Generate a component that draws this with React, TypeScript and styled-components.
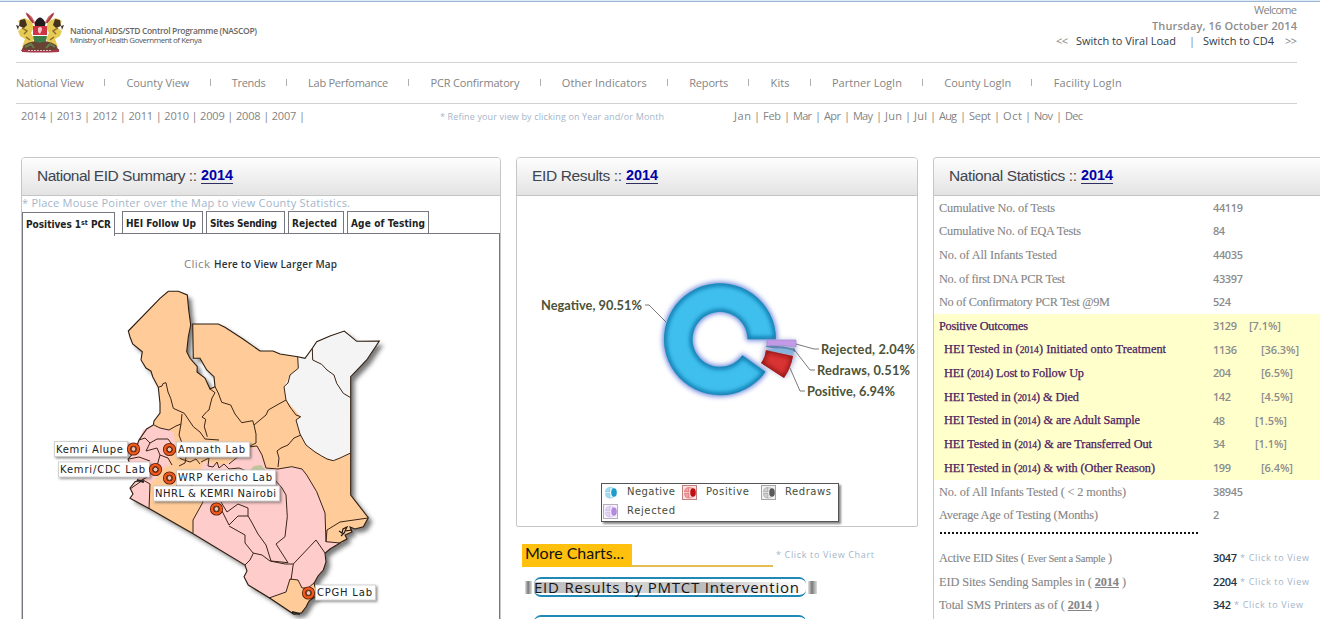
import React, { useLayoutEffect, useRef, useState } from 'react';
import styled, { createGlobalStyle, css } from 'styled-components';

const GlobalStyle = createGlobalStyle`
  * { box-sizing: border-box; }
  body { margin: 0; background: #fff; overflow: hidden; }
`;

const humanist = "'Open Sans', 'Noto Sans', sans-serif";
const verdana = "'DejaVu Sans', sans-serif";
const georgia = "'Liberation Serif', serif";
const arial = "'Liberation Sans', sans-serif";
const calibri = "Lato, sans-serif";

const FitSpan = styled.span`
  display: inline-block;
  white-space: nowrap;
`;

/* Tracks a label so that it fills the given width. */
function Fit({ w, children }: { w: number; children: React.ReactNode }) {
  const ref = useRef<HTMLSpanElement>(null);
  const [spacing, setSpacing] = useState(0);
  useLayoutEffect(() => {
    const el = ref.current;
    if (!el) return;
    const n = (el.textContent || '').length;
    const natural = el.getBoundingClientRect().width;
    if (n > 1) setSpacing((w - natural) / (n - 1));
  }, [w]);
  return (
    <FitSpan ref={ref} style={{ letterSpacing: spacing, marginRight: -spacing }}>
      {children}
    </FitSpan>
  );
}

const Page = styled.div`
  width: 1320px;
  height: 619px;
  overflow: hidden;
  background: #fff;
  color: #848484;
  font: 11px/14px ${humanist};
`;
const TopStrip = styled.div`
  height: 2px;
  background: #dfeaf7;
  border-bottom: 1px solid #9db7d6;
`;
const Header = styled.header`
  height: 61px;
  margin: 0 23px 0 16px;
  border-bottom: 1px solid #d2d2d2;
  display: flex;
  justify-content: space-between;
`;
const Brand = styled.div`
  display: flex;
  padding-top: 10px;
`;
const BrandText = styled.div`
  padding: 14px 0 0 6px;
  font: 8px/9px ${humanist};
  color: #555;
  b { display: block; font-size: 8.5px; font-weight: 600; color: #666; }
`;
const Account = styled.div`
  display: flex;
  flex-direction: column;
  align-items: flex-end;
  line-height: 15.5px;
`;
const DateText = styled.div`
  font-weight: 600;
  color: #8d8d8d;
`;
const Switches = styled.div`
  display: flex;
  a { color: #2f3b48; }
  i { font-style: normal; margin: 0 8px 0 13px; }
`;
const Lt = styled.span`
  margin: 0 8px;
  &:first-child { margin-left: 0; }
  &:last-child { margin: 0 0 0 11px; }
`;
const Nav = styled.nav`
  height: 41px;
  margin: 0 23px 0 16px;
  border-bottom: 1px solid #d2d2d2;
  display: flex;
  align-items: center;
`;
const NavSep = styled.span`
  width: 1px;
  height: 7px;
  background: #b0b0b0;
  margin: 0 21.2px 2px 20.2px;
`;
const Filters = styled.div`
  height: 53px;
  padding: 5px 0 0 21px;
  display: flex;
`;
const Hint = styled.div<{ $size?: number }>`
  font-size: ${(p) => p.$size || 9}px;
  color: #a3b6ca;
`;
const YearList = styled.div`width: 419px;`;
const FilterHint = styled(Hint)`width: 294px; padding-top: 1px;`;
const Months = styled.div`display: flex;`;
const Bar = styled.span`
  width: 12px;
  text-align: center;
`;
const Columns = styled.main`
  display: flex;
  align-items: flex-start;
  padding-left: 21px;
`;
const Column = styled.section<{ $w: number; $gap?: number }>`
  flex: none;
  width: ${(p) => p.$w}px;
  margin-right: ${(p) => p.$gap || 0}px;
`;
const Panel = styled.div<{ $h: number }>`
  height: ${(p) => p.$h}px;
  border: 1px solid #c6c6c6;
  border-radius: 4px 4px 2px 2px;
  overflow: hidden;
`;
const PanelTitle = styled.h2`
  margin: 0;
  height: 38px;
  padding: 0 15px 2px;
  display: flex;
  align-items: center;
  gap: 4px;
  background: linear-gradient(#fefefe, #e3e3e3);
  border-bottom: 1px solid #c4c4c4;
  font: 15.5px/18px ${arial};
  color: #3d4550;
  b { color: #0000a8; border-bottom: 1px solid #303060; font-size: 14.4px; line-height: 15px; margin-top: 1px; }
`;
const MapHint = styled(Hint)`
  height: 15px;
  line-height: 14px;
`;
const Tabs = styled.div`
  display: flex;
  height: 22px;
  gap: 3px;
  position: relative;
`;
const Tab = styled.div<{ $w: number; $active?: boolean }>`
  width: ${(p) => p.$w}px;
  height: 22px;
  border: 1px solid #77777f;
  border-bottom: 0;
  padding: 0 0 0 3px;
  background: #fff;
  color: #222;
  font: bold 10px/23px ${verdana};
  font-stretch: condensed;
  ${(p) => p.$active && css`
    height: 24px;
    margin: 1px 4px -2px 0;
    z-index: 1;
  `}
  sup { font-size: 7px; line-height: 0; vertical-align: 3px; }
`;
const TabBody = styled.div`
  height: 386px;
  border: 1px solid #77777f;
  border-bottom: 0;
`;
const MapLink = styled.div`
  display: flex;
  gap: 4px;
  padding: 23px 0 0 161px;
  height: 46px;
  font-size: 11.5px;
  a { font-size: 10px; font-weight: 600; color: #2a333d; }
`;
const Drawing = styled.svg`display: block; flex: none;`;
const ChartArea = styled.div`
  height: 287px;
`;
const Legend = styled.div`
  width: 238px;
  height: 39px;
  margin-left: 84px;
  padding: 0 1px;
  border: 1px solid #555;
  box-shadow: 2px 2px 2px #888;
  display: grid;
  grid-template-columns: 79px 79px 78px;
  grid-auto-rows: 19px;
`;
const LegendItem = styled.div`
  display: flex;
  align-items: center;
  gap: 9px;
  font: 10px/16px ${verdana};
  color: #444d3a;
  span { padding-bottom: 3px; }
  svg { margin-top: -2px; }
`;
const MoreCharts = styled.div`
  display: flex;
  align-items: flex-start;
  margin: 17px 0 0 6px;
`;
const MoreLabel = styled.div`
  width: 110px;
  height: 23px;
  padding-left: 3px;
  background: #ffc00e;
  color: #111;
  font: 16px/17px ${calibri};
`;
const MoreLine = styled.div`
  width: 141px;
  height: 2px;
  margin: 21px 3px 0 0;
  background: #e2bf50;
`;
const MoreHint = styled(Hint)`padding-top: 4px;`;
const Ribbon = styled.div`
  width: 292px;
  height: 20px;
  margin: 10px 0 18px 9px;
  display: grid;
  grid-template-columns: 7px 1fr 9px;
  align-items: center;
  gap: 2px;
`;
const RibbonEnd = styled.span`
  height: 13px;
  background: linear-gradient(90deg, #e4e4e4, #777 45%, #999 60%, #ddd);
`;
const RibbonFace = styled.div`
  height: 20px;
  border-top: 2px solid #2089b8;
  border-bottom: 2px solid #2089b8;
  border-radius: 7px;
  display: flex;
  align-items: center;
  background: linear-gradient(90deg, #bcbcbc, #d4d4d4 40%, #b9b9b9 60%, #eee 88%, #fff) center / 100% 11px no-repeat;
  color: #151515;
  font: 15px/14px ${humanist};
`;
const StatsPanel = styled(Panel)`border-bottom: 0; border-right: 0; border-radius: 4px 0 0 0;`;
const Stat = styled.div<{ $hot?: boolean }>`
  height: 23.66px;
  display: grid;
  grid-template-columns: 274px 1fr;
  align-items: center;
  padding-left: 5px;
  background: ${(p) => (p.$hot ? '#ffffcc' : 'transparent')};
`;
const StatLabel = styled.div<{ $indent?: boolean; $hot?: boolean }>`
  font: 12.3px/16px ${georgia};
  color: ${(p) => (p.$hot ? '#4a1a60' : '#858585')};
  padding-left: ${(p) => (p.$indent ? 5 : 0)}px;
  -webkit-text-stroke: ${(p) => (p.$hot ? 0.25 : 0.1)}px;
  small { font-size: 10.5px; }
`;
const OldStyle = styled.span`
  font-size: 9.5px;
`;
const StatValue = styled.div<{ $dark?: boolean }>`
  display: flex;
  align-items: center;
  font-weight: 600;
  font-size: 11px;
  color: ${(p) => (p.$dark ? '#26323f' : '#8c8c8c')};
`;
const Percent = styled.span<{ $gap: number }>`
  margin-left: ${(p) => p.$gap}px;
`;
const ViewHint = styled(Hint)`
  margin-left: 3px;
  font-weight: 500;
`;
const Dots = styled.div`
  width: 259px;
  height: 2px;
  margin: 5px 0 12px 6px;
  background: repeating-linear-gradient(90deg, #111 0 2px, transparent 2px 4px);
`;

const navItems: [string, number][] = [
  ['National View', 68], ['County View', 63], ['Trends', 34], ['Lab Perfomance', 80],
  ['PCR Confirmatory', 89], ['Other Indicators', 85], ['Reports', 39], ['Kits', 19],
  ['Partner LogIn', 70], ['County LogIn', 67], ['Facility LogIn', 68],
];
const months: [string, number][] = [
  ['Jan', 17], ['Feb', 18], ['Mar', 19], ['Apr', 17], ['May', 20], ['Jun', 17],
  ['Jul', 13], ['Aug', 18], ['Sept', 22], ['Oct', 19], ['Nov', 19], ['Dec', 18],
];
type Row = { t: string; w: number; v: string; vw: number; p?: string; pw?: number; gap?: number; hot?: boolean; indent?: boolean };
const rows: Row[] = [
  { t: 'Cumulative No. of Tests', w: 116, v: '44119', vw: 30 },
  { t: 'Cumulative No. of EQA Tests', w: 142, v: '84', vw: 12 },
  { t: 'No. of All Infants Tested', w: 118, v: '44035', vw: 30 },
  { t: 'No. of first DNA PCR Test', w: 126, v: '43397', vw: 30 },
  { t: 'No of Confirmatory PCR Test @9M', w: 171, v: '524', vw: 18 },
  { t: 'Positive Outcomes', w: 89, v: '3129', vw: 24, p: '[7.1%]', pw: 32, gap: 12, hot: true },
  { t: 'HEI Tested in (2014) Initiated onto Treatment', w: 222, v: '1136', vw: 24, p: '[36.3%]', pw: 38, gap: 24, hot: true, indent: true },
  { t: 'HEI (2014) Lost to Follow Up', w: 140, v: '204', vw: 18, p: '[6.5%]', pw: 32, gap: 30, hot: true, indent: true },
  { t: 'HEI Tested in (2014) & Died', w: 135, v: '142', vw: 18, p: '[4.5%]', pw: 32, gap: 30, hot: true, indent: true },
  { t: 'HEI Tested in (2014) & are Adult Sample', w: 196, v: '48', vw: 12, p: '[1.5%]', pw: 32, gap: 30, hot: true, indent: true },
  { t: 'HEI Tested in (2014) & are Transferred Out', w: 208, v: '34', vw: 12, p: '[1.1%]', pw: 32, gap: 30, hot: true, indent: true },
  { t: 'HEI Tested in (2014) & with (Other Reason)', w: 211, v: '199', vw: 18, p: '[6.4%]', pw: 32, gap: 30, hot: true, indent: true },
  { t: 'No. of All Infants Tested ( < 2 months)', w: 187, v: '38945', vw: 30 },
  { t: 'Average Age of Testing (Months)', w: 159, v: '2', vw: 6 },
];

/* Sets the year inside a label in small figures. */
function withYear(text: string) {
  const [before, after] = text.split('2014');
  return after === undefined ? text : <>{before}<OldStyle>2014</OldStyle>{after}</>;
}

function Crest() {
  return (
    <Drawing width="48" height="42" viewBox="0 0 48 42">
      <path d="M10 1l5 4 16 27M38 1l-5 4-16 27" stroke="#c4686a" strokeWidth="1.6" fill="none" />
      <path d="M11 2l6 9M37 2l-6 9" stroke="#a83a40" strokeWidth="2.2" />
      <path d="M2 9l6-3 7 3 3 6-3 6 3 5-3 9H6l3-8-5-3-2-5 4-3z" fill="#e5cb55" />
      <path d="M46 9l-6-3-7 3-3 6 3 6-3 5 3 9h9l-3-8 5-3 2-5-4-3z" fill="#e5cb55" />
      <path d="M4 8l5-1 2 6-3 3-5-2zM44 8l-5-1-2 6 3 3 5-2zM0 13l3 1-1 4zM48 13l-3 1 1 4z" fill="#45331c" />
      <path d="M6 16l5 3-3 3M42 16l-5 3 3 3M10 25l4 3M38 25l-4 3" stroke="#8b6a24" strokeWidth="1.4" fill="none" />
      <path d="M19 10q5-9 10 0v5H19z" fill="#211d1d" />
      <path d="M17 14h14v10H17z" fill="#cf3444" />
      <path d="M17 24h14q-1 8-7 11-6-3-7-11z" fill="#3c7d48" />
      <path d="M16 23.500h16" stroke="#fff" strokeWidth="1" />
      <path d="M22 16q4-3 4 2l-2 4-2-2z" fill="#f5c5c9" />
      <path d="M8 33q8-6 16-2 8-4 16 2l3 6H5z" fill="#684334" />
      <path d="M9 35l6-3 3 4M30 36l4-4 5 3" stroke="#63804b" strokeWidth="2" fill="none" />
      <path d="M6 37q18 4 37 0v3q-18 1-37 0z" fill="#a2394b" />
      <path d="M12 38.500h24" stroke="#e3bcc0" strokeWidth="1" strokeDasharray="2 1" />
    </Drawing>
  );
}

const outline = 'M128.300 331L160 298.300 168.300 291.300 178.300 291.300 187.300 295 188.700 310 190.700 325 188.300 337 186.700 351.700 190 358.300 197.300 366.700 197 372 205 378 210 389 215 386.700 214 376.700 206.700 370 200 358.300 193.300 358.300 192.700 324 218.300 324 225 327.300 243 339 260 351 273 351 280 354 297.700 356.700 305 358.300 312.300 348.300 316.700 341.700 330 336 344.300 331 356.700 341.300 379.300 341 366.700 360 350.700 376.700 350.700 495 368.300 517.700 363.300 526.700 355 529 350 527 352 532 345 535 347 539 341.700 541.700 336.700 545 330 549 325 553.300 326 562 323.300 570 318 576 314 583.300 316 590 315 596.700 309 601 306 607 301.700 612.700 294 614.300 270 598.300 248.300 585 244 576.700 247 571 245 565 192.300 533.300 150 509 130 498.300 133 494 130 488 135 481.700 142 480 147 477 143 470 137 466 130 464 128 459 135 451 139 440 146.700 429 153.300 425 154 421 160 413 160 403.300 158.300 387.300 152.700 376.700 151 371 146 368 141 360 142.300 351.700 132.700 344 130 337Z';
const pinks = [
  'M139 440L143 430 153 426 160 429 166 428 174 433 175 446 172 455 176 464 163 468 158 476 149 485 150 509 130 498 133 494 130 488 135 482 143 470 129 463 129 458 135 451Z',
  'M203 502L193 520 192.300 533.300 245 565 247 571 244 576.700 248.300 585 271 598 286 592 290 579 298 580 302 588 308 588 314 583 318 576 323.300 570 326 562 325 553 334 546 343 542 340 542 326 541.700 325 513 316.700 491.700 306.700 475 302 469 291.700 466.700 278 469 266 468 257 446 240 455 225 465 203 462 198 490Z',
];
const borders = [
  'M158.300 387.300L162 386 163 383.500 166 382.700 168 392 170.700 398.300 173.300 408.300 184.300 413.300 193.300 426.700 200 432 205 439 219 440',
  'M210 389L215 392.700 212 398 210.700 403 209 410 206.700 411.700 202 417 205.700 419.300 204.300 426.700 207.300 436.700',
  'M215 386.700L218.300 393 221.700 402.300 230.700 405 235 414 241.700 422.700 252.700 420.700 254 425 266 415 268.300 410 277 405 286 400',
  'M254 425L256 434 256 443 248 447M154 425L160 428 169 430 176 426 181 424 182 414M181 424L179 435 182 443 181 451',
  'M297.700 356.700L298.300 368.300 290 375 288 383 284 386.700 286 400 290 407 296 415 300.700 416.700 296 420 300 434 306 445 315 452 321.700 456 327 459 333.300 460.700 340 458 350 453.300',
  'M312.300 348.300L312.700 360 321.700 364.300 327 370 334 375 336.700 383.300 343.300 393.300 350 397.300',
  'M301 435L294 438 288 445 281 448 277 451 279 458 278 467M257 446L262 455 266 468M257 446L248 447 240 455 229 464',
  'M275 480L282 488 286 495 287.300 516.700 285 536.700 276 544 288 562.700M266 468L278 469 291.700 466.700 302 469 306.700 475 316.700 491.700 325 513 326 541.700 340 543',
  'M293.300 564L316 540 325 553M288 562.700L271 561 266 545 258 534 251 521 248 516 238 516 229 525 222 511M229 526L245 535 245 543 253.300 553.300 250 560 245 565M253 553L262 555 270 561 285 564 293.300 564 291 580',
  'M269 598L286 592 290 579 298 580 302 588 308 588 314 583M327 530L340 522 354 520 368 518M193 520L203 502M203 502L198 490 192 485',
  'M139 440L145 438 150 443 157 439 168 439 174 447M150 443L146 451 157 448 160 455 157 466 149 475M160 455L168 458 172 465M129 459L139 457 150 461M130 489L143 480 150 484 149 509M172 447L181 459 190 462 196 459 200 464M187 451L185 463 179 466',
  'M201 462L209 458 208 466 213 467 217 462 219 468 224 464 229 469 239 468 249 472M221 502L227 512 238 504 248 508 248 516M192 485L183 490 176 485',
];
const labs = [
  { t: 'Kemri Alupe', x: 54, y: 441, w: 73, tw: 67, cx: 133.500, cy: 449 },
  { t: 'Ampath Lab', x: 176, y: 441.5, w: 73, tw: 67, cx: 169.500, cy: 449.500 },
  { t: 'Kemri/CDC Lab', x: 58, y: 461.5, w: 91, tw: 85, cx: 155.500, cy: 469.500 },
  { t: 'WRP Kericho Lab', x: 176, y: 469.5, w: 99, tw: 94, cx: 169.500, cy: 478 },
  { t: 'NHRL & KEMRI Nairobi', x: 153, y: 485.5, w: 126, tw: 121, cx: 216.500, cy: 509 },
  { t: 'CPGH Lab', x: 315, y: 584.5, w: 60, tw: 55, cx: 308.500, cy: 593 },
];

function CountyMap() {
  return (
    <Drawing width="476" height="339" viewBox="23 280 476 339">
      <defs>
        <filter id="shade" x="-10%" y="-10%" width="125%" height="125%">
          <feDropShadow dx="4" dy="4" stdDeviation="2" floodColor="#333" floodOpacity="0.65" />
        </filter>
        <filter id="tag" x="-10%" y="-20%" width="120%" height="160%">
          <feDropShadow dx="1.500" dy="1.500" stdDeviation="1" floodColor="#444" floodOpacity="0.6" />
        </filter>
      </defs>
      <path d={outline} fill="#ffcc99" filter="url(#shade)" />
      {pinks.map((d) => <path key={d} d={d} fill="#ffcccc" />)}
      <path d="M249 471l5-5 7-1 4 4-3 5-12 2z" fill="#bfc49b" />
      <path d="M168 458l10-6 12 9-4 10-14 3z" fill="#ffcc99" />
      <path d="M150 484l35 6 12 2 6 10-10 18v13l-43-24z" fill="#ffcc99" />
      <path d="M297.700 356.700L305 358.300 312.300 348.300 316.700 341.700 330 336 344.300 331 356.700 341.300 379.300 341 366.700 360 350.700 376.700 350.500 453 340 458 333.300 460.700 321.700 456 306 445 300 434 296 420 300.700 416.700 286 400 284 386.700 290 375 298.300 368.300Z" fill="#f4f4f4" />
      <path d={outline} fill="none" stroke="#2b1c10" strokeWidth="1.100" />
      <path d="M193 520v13" stroke="#3a2416" />
      {borders.map((d) => <path key={d} d={d} fill="none" stroke="#3a2416" strokeWidth="1" />)}
      <path d="M327 530l-1 12" stroke="#3a2416" />
      <path d="M352 530l-7 1 2-4-4 2-1 4-3-2M345 532l-4 4" fill="none" stroke="#1c120a" strokeWidth="1.100" />
      <path d="M137 480l7 2M292 612l8 2" stroke="#222" strokeWidth="2" />
      {labs.map((l) => (
        <g key={l.t}>
          <g filter="url(#tag)">
            <rect x={l.x + 0.5} y={l.y + 0.5} width={l.w} height="15" fill="#fff" stroke="#c9c9c9" strokeWidth="0.800" />
          </g>
          <text x={l.x + 2} y={l.y + 11.5} textLength={l.tw} fontFamily="DejaVu Sans, sans-serif" fontSize="10" fill="#222">{l.t}</text>
          <circle cx={l.cx} cy={l.cy} r="4.500" fill="#d9c3b4" stroke="#5a1f08" strokeWidth="4.200" />
          <circle cx={l.cx} cy={l.cy} r="4.500" fill="none" stroke="#f0591b" strokeWidth="2.600" />
          <circle cx={l.cx} cy={l.cy} r="2.400" fill="#e8c9b8" stroke="#5a2412" strokeWidth="1" />
        </g>
      ))}
    </Drawing>
  );
}

function ResultsChart() {
  const label = { fontFamily: 'Lato, sans-serif', fontSize: 12.8, fontWeight: 700, fill: '#4b5238' };
  const ring = 'M776 339.300A56 56 0 1 0 765.600 371.800L742.400 355.300A27.500 27.500 0 1 1 747.500 339.300Z';
  return (
    <Drawing width="400" height="287" viewBox="517 196 400 287">
      <defs>
        <filter id="glow" x="-20%" y="-20%" width="140%" height="140%"><feGaussianBlur stdDeviation="2.500" /></filter>
        <filter id="soft"><feGaussianBlur stdDeviation="2.200" /></filter>
        <clipPath id="ringClip"><path d={ring} /></clipPath>
        <clipPath id="redClip"><path d="M766 350l27 6q-2 12-9 22l-23-15q4-5 5-13z" /></clipPath>
      </defs>
      <path d={ring} fill="#4a66c8" stroke="#5f78d8" strokeWidth="3" filter="url(#glow)" opacity="0.85" />
      <path d={ring} fill="#3fbfee" />
      <g clipPath="url(#ringClip)">
        <path d={ring} fill="none" stroke="#0d76a8" strokeWidth="5" filter="url(#soft)" />
      </g>
      <path d="M766 340h30v17l-10 21-25-14z" fill="#7f88bf" filter="url(#glow)" opacity="0.6" />
      <path d="M767 340h29v7q-14-3-29-1z" fill="#c29ae8" stroke="#a184cc" strokeWidth="0.600" />
      <path d="M766 346q15-1 29 3v3l-29-5z" fill="#5f86b0" />
      <path d="M767 350q14-4 27 1l-1 4-25-4z" fill="#86b4dc" />
      <path d="M766 350.500l27 5.500q-2 12-9 22l-23-15q4-5 5-12.500z" fill="#d93434" />
      <g clipPath="url(#redClip)">
        <path d="M766 350l27 6q-2 12-9 22l-23-15q4-5 5-13z" fill="none" stroke="#8e1414" strokeWidth="4" filter="url(#soft)" />
      </g>
      <path d="M645 305h4l17 17M796 344l18 5h5M793 348l17 22h5M790 368l10 23h5" fill="none" stroke="#6b6b6b" strokeWidth="0.900" />
      <text x="541" y="310" textLength="101" {...label}>Negative, 90.51%</text>
      <text x="821" y="354" textLength="94" {...label}>Rejected, 2.04%</text>
      <text x="817" y="375" textLength="93" {...label}>Redraws, 0.51%</text>
      <text x="807" y="396" textLength="88" {...label}>Positive, 6.94%</text>
    </Drawing>
  );
}

function LegendIcon({ color, tint, frame }: { color: string; tint: string; frame?: string }) {
  return (
    <Drawing width="15" height="15" viewBox="0 0 15 15">
      {frame && <rect x="0.500" y="0.500" width="14" height="14" fill={tint} fillOpacity="0.3" stroke={frame} />}
      <path d="M7 2.500Q2.500 2.500 2.500 7H7zM2.500 8.500q0 4.500 4.500 4.500V8.500z" fill={tint} stroke={color} strokeOpacity="0.5" strokeWidth="0.600" />
      <path d="M7 2.500q3 0 4 2M7 13q3 0 4-2" stroke={tint} strokeWidth="1.500" fill="none" />
      <ellipse cx="11" cy="7.500" rx="2.800" ry="4.300" fill={color} />
    </Drawing>
  );
}

function Title({ text, w }: { text: string; w: number }) {
  return (
    <PanelTitle>
      <Fit w={w}>{text}</Fit>
      <b><Fit w={32}>2014</Fit></b>
    </PanelTitle>
  );
}

export default function App() {
  return (
    <Page>
      <GlobalStyle />
      <TopStrip />
      <Header>
        <Brand>
          <Crest />
          <BrandText>
            <b><Fit w={187}>National AIDS/STD Control Programme (NASCOP)</Fit></b>
            <Fit w={132}>Ministry of Health Government of Kenya</Fit>
          </BrandText>
        </Brand>
        <Account>
          <Fit w={43}>Welcome</Fit>
          <DateText><Fit w={145}>Thursday, 16 October 2014</Fit></DateText>
          <Switches>
            <Lt><Fit w={12}>&lt;&lt;</Fit></Lt>
            <a><Fit w={100}>Switch to Viral Load</Fit></a>
            <i>|</i>
            <a><Fit w={71}>Switch to CD4</Fit></a>
            <Lt><Fit w={12}>&gt;&gt;</Fit></Lt>
          </Switches>
        </Account>
      </Header>
      <Nav>
        {navItems.map(([t, w], i) => (
          <React.Fragment key={t}>
            {i > 0 && <NavSep />}
            <Fit w={w}>{t}</Fit>
          </React.Fragment>
        ))}
      </Nav>
      <Filters>
        <YearList><Fit w={284}>2014 | 2013 | 2012 | 2011 | 2010 | 2009 | 2008 | 2007 |</Fit></YearList>
        <FilterHint><Fit w={224}>* Refine your view by clicking on Year and/or Month</Fit></FilterHint>
        <Months>
          {months.map(([t, w], i) => (
            <React.Fragment key={t}>
              {i > 0 && <Bar>|</Bar>}
              <Fit w={w}>{t}</Fit>
            </React.Fragment>
          ))}
        </Months>
      </Filters>
      <Columns>
        <Column $w={480} $gap={15}>
          <Panel $h={470}>
            <Title text="National EID Summary ::" w={160} />
            <MapHint $size={11}><Fit w={328}>* Place Mouse Pointer over the Map to view County Statistics.</Fit></MapHint>
            <Tabs>
              <Tab $w={93} $active><Fit w={85}>Positives 1<sup>st</sup> PCR</Fit></Tab>
              <Tab $w={81}><Fit w={70}>HEI Follow Up</Fit></Tab>
              <Tab $w={79}><Fit w={67}>Sites Sending</Fit></Tab>
              <Tab $w={56}><Fit w={45}>Rejected</Fit></Tab>
              <Tab $w={82}><Fit w={74}>Age of Testing</Fit></Tab>
            </Tabs>
            <TabBody>
              <MapLink>
                <Fit w={26}>Click</Fit>
                <a><Fit w={123}>Here to View Larger Map</Fit></a>
              </MapLink>
              <CountyMap />
            </TabBody>
          </Panel>
        </Column>
        <Column $w={402} $gap={15}>
          <Panel $h={370}>
            <Title text="EID Results ::" w={90} />
            <ChartArea><ResultsChart /></ChartArea>
            <Legend>
              <LegendItem><LegendIcon color="#1c9dcc" tint="#a9def2" /><Fit w={48}>Negative</Fit></LegendItem>
              <LegendItem><LegendIcon color="#c00d12" tint="#f3a0a0" frame="#c08080" /><Fit w={43}>Positive</Fit></LegendItem>
              <LegendItem><LegendIcon color="#5a5a5a" tint="#cfcfcf" frame="#a5a5a5" /><Fit w={46}>Redraws</Fit></LegendItem>
              <LegendItem><LegendIcon color="#b48bdc" tint="#e3d2f5" frame="#b5aebe" /><Fit w={48}>Rejected</Fit></LegendItem>
            </Legend>
          </Panel>
          <MoreCharts>
            <MoreLabel><Fit w={99}>More Charts...</Fit></MoreLabel>
            <MoreLine />
            <MoreHint><Fit w={98}>* Click to View Chart</Fit></MoreHint>
          </MoreCharts>
          <Ribbon>
            <RibbonEnd />
            <RibbonFace><Fit w={265}>EID Results by PMTCT Intervention</Fit></RibbonFace>
            <RibbonEnd />
          </Ribbon>
          <Ribbon>
            <RibbonEnd />
            <RibbonFace />
            <RibbonEnd />
          </Ribbon>
        </Column>
        <Column $w={387}>
          <StatsPanel $h={480}>
            <Title text="National Statistics ::" w={128} />
            {rows.map((r) => (
              <Stat key={r.t} $hot={r.hot}>
                <StatLabel $hot={r.hot} $indent={r.indent}><Fit w={r.w}>{withYear(r.t)}</Fit></StatLabel>
                <StatValue>
                  <Fit w={r.vw}>{r.v}</Fit>
                  {r.p && <Percent $gap={r.gap || 0}><Fit w={r.pw || 0}>{r.p}</Fit></Percent>}
                </StatValue>
              </Stat>
            ))}
            <Dots />
            <Stat>
              <StatLabel><Fit w={173}>Active EID Sites ( <small>Ever Sent a Sample</small> )</Fit></StatLabel>
              <StatValue $dark><Fit w={24}>3047</Fit><ViewHint><Fit w={69}>* Click to View</Fit></ViewHint></StatValue>
            </Stat>
            <Stat>
              <StatLabel><Fit w={187}>EID Sites Sending Samples in ( <b><u>2014</u></b> )</Fit></StatLabel>
              <StatValue $dark><Fit w={24}>2204</Fit><ViewHint><Fit w={69}>* Click to View</Fit></ViewHint></StatValue>
            </Stat>
            <Stat>
              <StatLabel><Fit w={160}>Total SMS Printers as of ( <b><u>2014</u></b> )</Fit></StatLabel>
              <StatValue $dark><Fit w={18}>342</Fit><ViewHint><Fit w={69}>* Click to View</Fit></ViewHint></StatValue>
            </Stat>
          </StatsPanel>
        </Column>
      </Columns>
    </Page>
  );
}
